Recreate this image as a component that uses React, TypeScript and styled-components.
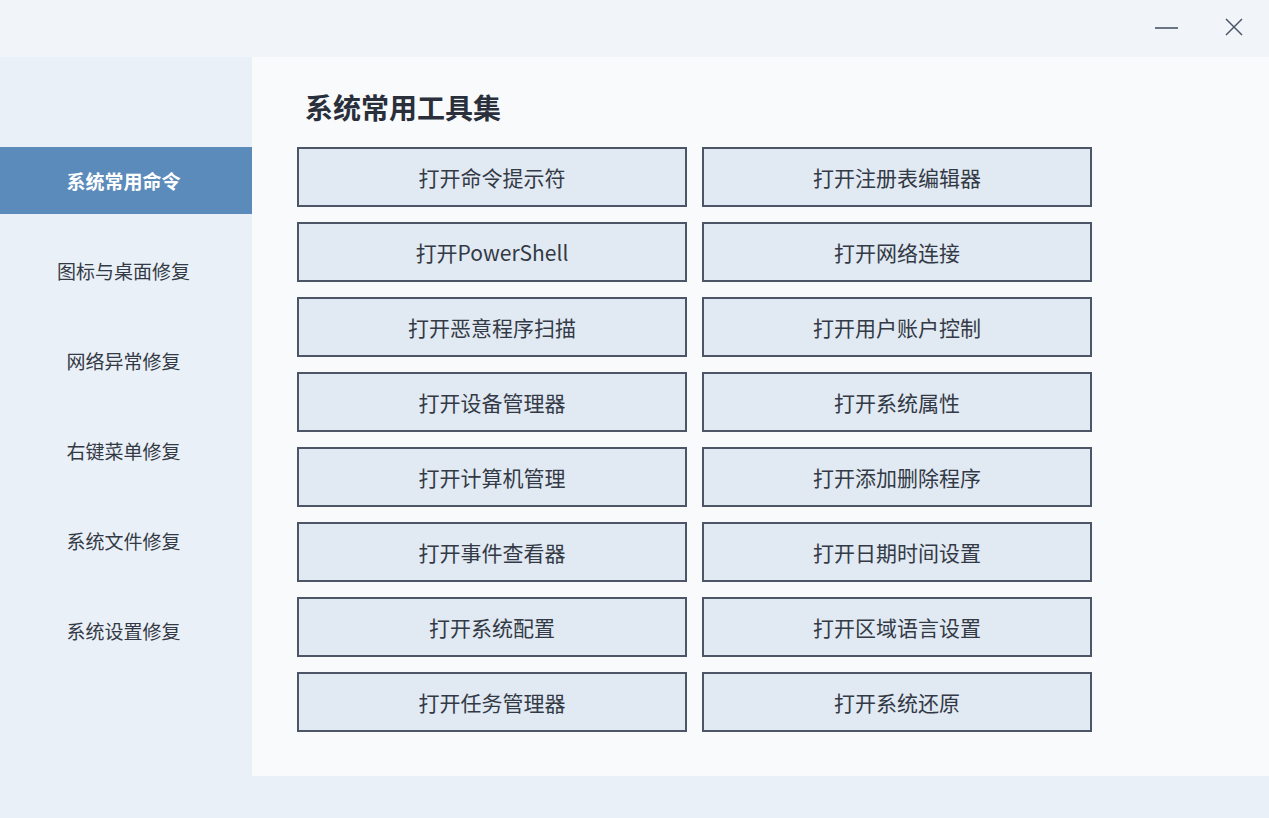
import React from "react"
import styled, { createGlobalStyle } from "styled-components"

const GlobalStyle = createGlobalStyle`
  html, body {
    margin: 0;
    padding: 0;
    background: #eaf0f7;
  }
  body {
    font-family: "Noto Sans CJK SC", "Noto Sans", sans-serif;
  }
`

const Window = styled.div`
  width: 1269px;
  height: 818px;
  display: flex;
  flex-direction: column;
  background: #eaf0f7;
  overflow: hidden;
`

const TitleBar = styled.div`
  height: 57px;
  flex: none;
  background: #f1f5fa;
  display: flex;
  justify-content: flex-end;
  align-items: center;
  padding-right: 20px;
  gap: 38px;
  box-sizing: border-box;
`

const WinButton = styled.button`
  width: 30px;
  height: 30px;
  border: none;
  background: transparent;
  padding: 0;
  display: flex;
  align-items: center;
  justify-content: center;
  color: #4a5566;
  margin-top: -3px;
`

const Body = styled.div`
  flex: none;
  display: flex;
  height: 719px;
`

const Sidebar = styled.nav`
  width: 252px;
  flex: none;
  padding-top: 90px;
  display: flex;
  flex-direction: column;
  gap: 23px;
  box-sizing: border-box;
`

const NavItem = styled.div<{ $active?: boolean }>`
  height: 67px;
  display: flex;
  align-items: center;
  justify-content: center;
  padding-right: 5px;
  font-size: 19px;
  color: ${(p) => (p.$active ? "#ffffff" : "#333a45")};
  background: ${(p) => (p.$active ? "#5b8bbb" : "transparent")};
  font-weight: ${(p) => (p.$active ? 700 : 400)};
`

const Main = styled.main`
  flex: 1;
  background: #f8fafc;
  padding: 30px 0 0 45px;
  box-sizing: border-box;
`

const Heading = styled.h1`
  margin: 0 0 20px 8px;
  font-size: 28px;
  line-height: 40px;
  font-weight: 700;
  color: #2a303b;
`

const Grid = styled.div`
  display: grid;
  grid-template-columns: 390px 390px;
  grid-auto-rows: 60px;
  gap: 15px;
`

const ToolButton = styled.button`
  border: 2px solid #4d5666;
  background: #e1e9f3;
  font-family: "Noto Sans CJK SC", "Noto Sans", sans-serif;
  font-size: 21px;
  color: #333a45;
  padding: 0;
  cursor: pointer;
`

const navItems = [
  "系统常用命令",
  "图标与桌面修复",
  "网络异常修复",
  "右键菜单修复",
  "系统文件修复",
  "系统设置修复",
]

const tools = [
  "打开命令提示符",
  "打开注册表编辑器",
  "打开PowerShell",
  "打开网络连接",
  "打开恶意程序扫描",
  "打开用户账户控制",
  "打开设备管理器",
  "打开系统属性",
  "打开计算机管理",
  "打开添加删除程序",
  "打开事件查看器",
  "打开日期时间设置",
  "打开系统配置",
  "打开区域语言设置",
  "打开任务管理器",
  "打开系统还原",
]

const App: React.FC = () => {
  return (
    <Window>
      <GlobalStyle />
      <TitleBar>
        <WinButton aria-label="最小化">
          <svg width="24" height="24" viewBox="0 0 24 24">
            <line x1="1" y1="13" x2="24" y2="13" stroke="currentColor" strokeWidth="1.6" />
          </svg>
        </WinButton>
        <WinButton aria-label="关闭">
          <svg width="20" height="20" viewBox="0 0 20 20">
            <path d="M2 2 L18 18 M18 2 L2 18" stroke="currentColor" strokeWidth="1.5" fill="none" />
          </svg>
        </WinButton>
      </TitleBar>
      <Body>
        <Sidebar>
          {navItems.map((item, i) => (
            <NavItem key={item} $active={i === 0}>
              {item}
            </NavItem>
          ))}
        </Sidebar>
        <Main>
          <Heading>系统常用工具集</Heading>
          <Grid>
            {tools.map((t) => (
              <ToolButton key={t}>{t}</ToolButton>
            ))}
          </Grid>
        </Main>
      </Body>
    </Window>
  )
}

export default App
